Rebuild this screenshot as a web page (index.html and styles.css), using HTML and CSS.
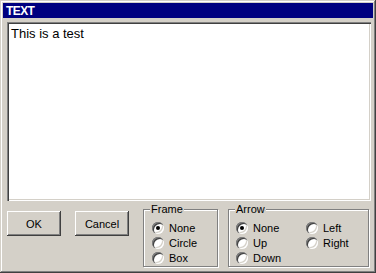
FILE: index.html
```html
<!DOCTYPE html>
<html lang="en">
<head>
  <meta charset="UTF-8">
  <title>TEXT</title>
  <link rel="stylesheet" href="styles.css">
</head>
<body>
  <div class="window">
    <div class="titlebar">TEXT</div>
    <div class="content">
      <div class="textbox">This is a test</div>

      <div class="controls">
        <button class="btn">OK</button>
        <button class="btn btn-cancel">Cancel</button>

        <div class="group group-frame">
          <span class="group-label">Frame</span>
          <div class="options">
            <label class="option"><span class="radio checked"></span>None</label>
            <label class="option"><span class="radio"></span>Circle</label>
            <label class="option"><span class="radio"></span>Box</label>
          </div>
        </div>

        <div class="group group-arrow">
          <span class="group-label">Arrow</span>
          <div class="options options-two">
            <label class="option"><span class="radio checked"></span>None</label>
            <label class="option"><span class="radio"></span>Left</label>
            <label class="option"><span class="radio"></span>Up</label>
            <label class="option"><span class="radio"></span>Right</label>
            <label class="option"><span class="radio"></span>Down</label>
          </div>
        </div>
      </div>
    </div>
  </div>
</body>
</html>
```

FILE: styles.css
```css
body {
  margin: 0;
  background: #d4d0c8;
  font-family: "Liberation Sans", Arial, sans-serif;
  font-size: 11px;
  color: #000;
}

.window {
  width: 376px;
  height: 273px;
  box-sizing: border-box;
  padding: 3px;
  background: #d4d0c8;
  box-shadow:
    inset -1px -1px 0 #404040,
    inset 1px 1px 0 #d4d0c8,
    inset -2px -2px 0 #808080,
    inset 2px 2px 0 #fff;
  display: flex;
  flex-direction: column;
}

.titlebar {
  height: 15px;
  line-height: 16px;
  background: #000080;
  color: #fff;
  font-weight: bold;
  font-size: 12px;
  letter-spacing: -0.6px;
  padding-left: 3px;
}

.content {
  padding: 4px 2px 0 4px;
}

.textbox {
  height: 179px;
  box-sizing: border-box;
  background: #fff;
  padding: 4px 2px 0 4px;
  font-size: 13px;
  line-height: 15px;
  box-shadow:
    inset 1px 1px 0 #808080,
    inset 2px 2px 0 #404040,
    inset -1px -1px 0 #fff,
    inset -2px -2px 0 #d4d0c8;
}

.controls {
  display: flex;
  align-items: flex-start;
  margin-top: 8px;
}

.btn {
  width: 54px;
  height: 25px;
  margin-top: 2px;
  padding: 0;
  border: none;
  background: #d4d0c8;
  font-family: inherit;
  font-size: 11px;
  color: #000;
  box-shadow:
    inset -1px -1px 0 #404040,
    inset 1px 1px 0 #fff,
    inset -2px -2px 0 #808080,
    inset 2px 2px 0 #d4d0c8;
}

.btn-cancel {
  margin-left: 14px;
}

.group {
  position: relative;
  height: 58px;
  box-sizing: border-box;
  border: 1px solid #808080;
  box-shadow: inset 1px 1px 0 #fff, 1px 1px 0 #fff;
}

.group-frame {
  width: 75px;
  margin-left: 14px;
}

.group-arrow {
  width: 141px;
  margin-left: 10px;
}

.group-label {
  position: absolute;
  top: -7px;
  left: 6px;
  padding: 0 1px;
  line-height: 13px;
  background: #d4d0c8;
}

.options {
  display: grid;
  padding: 10px 0 0 8px;
}

.options-two {
  grid-template-columns: 70px auto;
  padding-left: 7px;
}

.option {
  display: flex;
  align-items: center;
  height: 15px;
}

.radio {
  position: relative;
  width: 12px;
  height: 12px;
  margin-right: 5px;
  border-radius: 50%;
  background: #fff;
  box-shadow:
    inset 1px 1px 0 #808080,
    inset 2px 2px 0 #404040,
    inset -1px -1px 0 #fff,
    inset -2px -2px 0 #d4d0c8;
}

.radio.checked::after {
  content: "";
  position: absolute;
  left: 4px;
  top: 4px;
  width: 4px;
  height: 4px;
  border-radius: 50%;
  background: #000;
}
```
